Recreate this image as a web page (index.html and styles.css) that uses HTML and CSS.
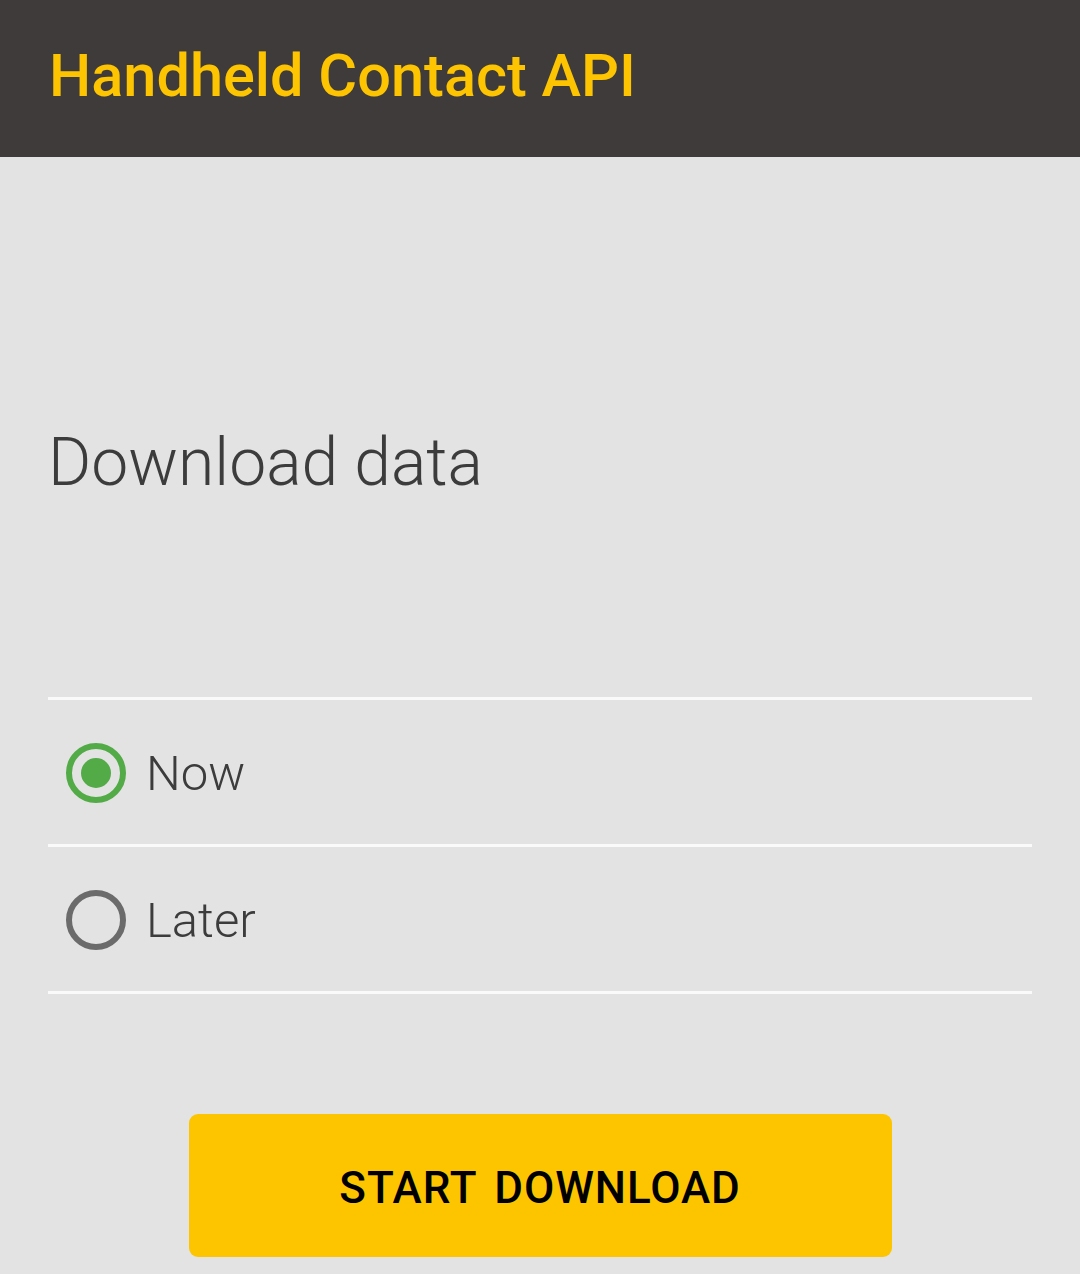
FILE: index.html
```html
<!DOCTYPE html>
<html>
<head>
<meta charset="utf-8">
<link rel="stylesheet" href="styles.css">
</head>
<body>
<header class="appbar">
  <h1 class="appbar-title">Handheld Contact API</h1>
</header>
<main class="content">
  <h2 class="heading">Download data</h2>
  <div class="options">
    <label class="option">
      <span class="radio radio-on"><span class="radio-dot"></span></span>
      <span class="option-label">Now</span>
    </label>
    <label class="option">
      <span class="radio"></span>
      <span class="option-label">Later</span>
    </label>
  </div>
  <div class="actions">
    <button class="btn">START DOWNLOAD</button>
  </div>
</main>
</body>
</html>
```
FILE: styles.css
```css
html, body {
  margin: 0;
  padding: 0;
}
body {
  background: #e3e3e3;
  font-family: Roboto, "Noto Sans", sans-serif;
  width: 1080px;
  height: 1274px;
  overflow: hidden;
}
.appbar {
  background: #3f3b3a;
  height: 157px;
  box-sizing: border-box;
  padding-left: 49px;
  display: flex;
  align-items: center;
}
.appbar-title {
  margin: 0;
  color: #fdc402;
  font-size: 59.5px;
  font-weight: 500;
  line-height: 70px;
  margin-top: -6px;
}
.content {
  padding: 266px 48px 0 48px;
}
.heading {
  margin: 0 0 194px 0;
  font-size: 66px;
  font-weight: 300;
  line-height: 80px;
  color: #3c3c3c;
}
.options {
  border-top: 3px solid #fafafa;
}
.option {
  display: flex;
  align-items: center;
  height: 144px;
  border-bottom: 3px solid #fafafa;
  padding-left: 18px;
  gap: 20px;
}
.radio {
  width: 60px;
  height: 60px;
  box-sizing: border-box;
  border: 6px solid #6b6b6b;
  border-radius: 50%;
  display: flex;
  align-items: center;
  justify-content: center;
  flex: none;
  margin-top: 2px;
}
.radio-on {
  border-color: #52ab47;
}
.radio-dot {
  width: 30px;
  height: 30px;
  border-radius: 50%;
  background: #52ab47;
}
.option-label {
  font-size: 49px;
  font-weight: 300;
  color: #3c3c3c;
  line-height: 60px;
  margin-top: 4px;
}
.actions {
  display: flex;
  justify-content: center;
  padding-top: 120px;
}
.btn {
  width: 703px;
  height: 143px;
  border: none;
  border-radius: 9px;
  background: #fdc500;
  color: #000;
  font-family: Roboto, "Noto Sans", sans-serif;
  font-size: 44px;
  font-weight: 500;
  letter-spacing: 0.9px;
  word-spacing: 6px;
  padding: 0;
  padding-top: 4px;
}
```
